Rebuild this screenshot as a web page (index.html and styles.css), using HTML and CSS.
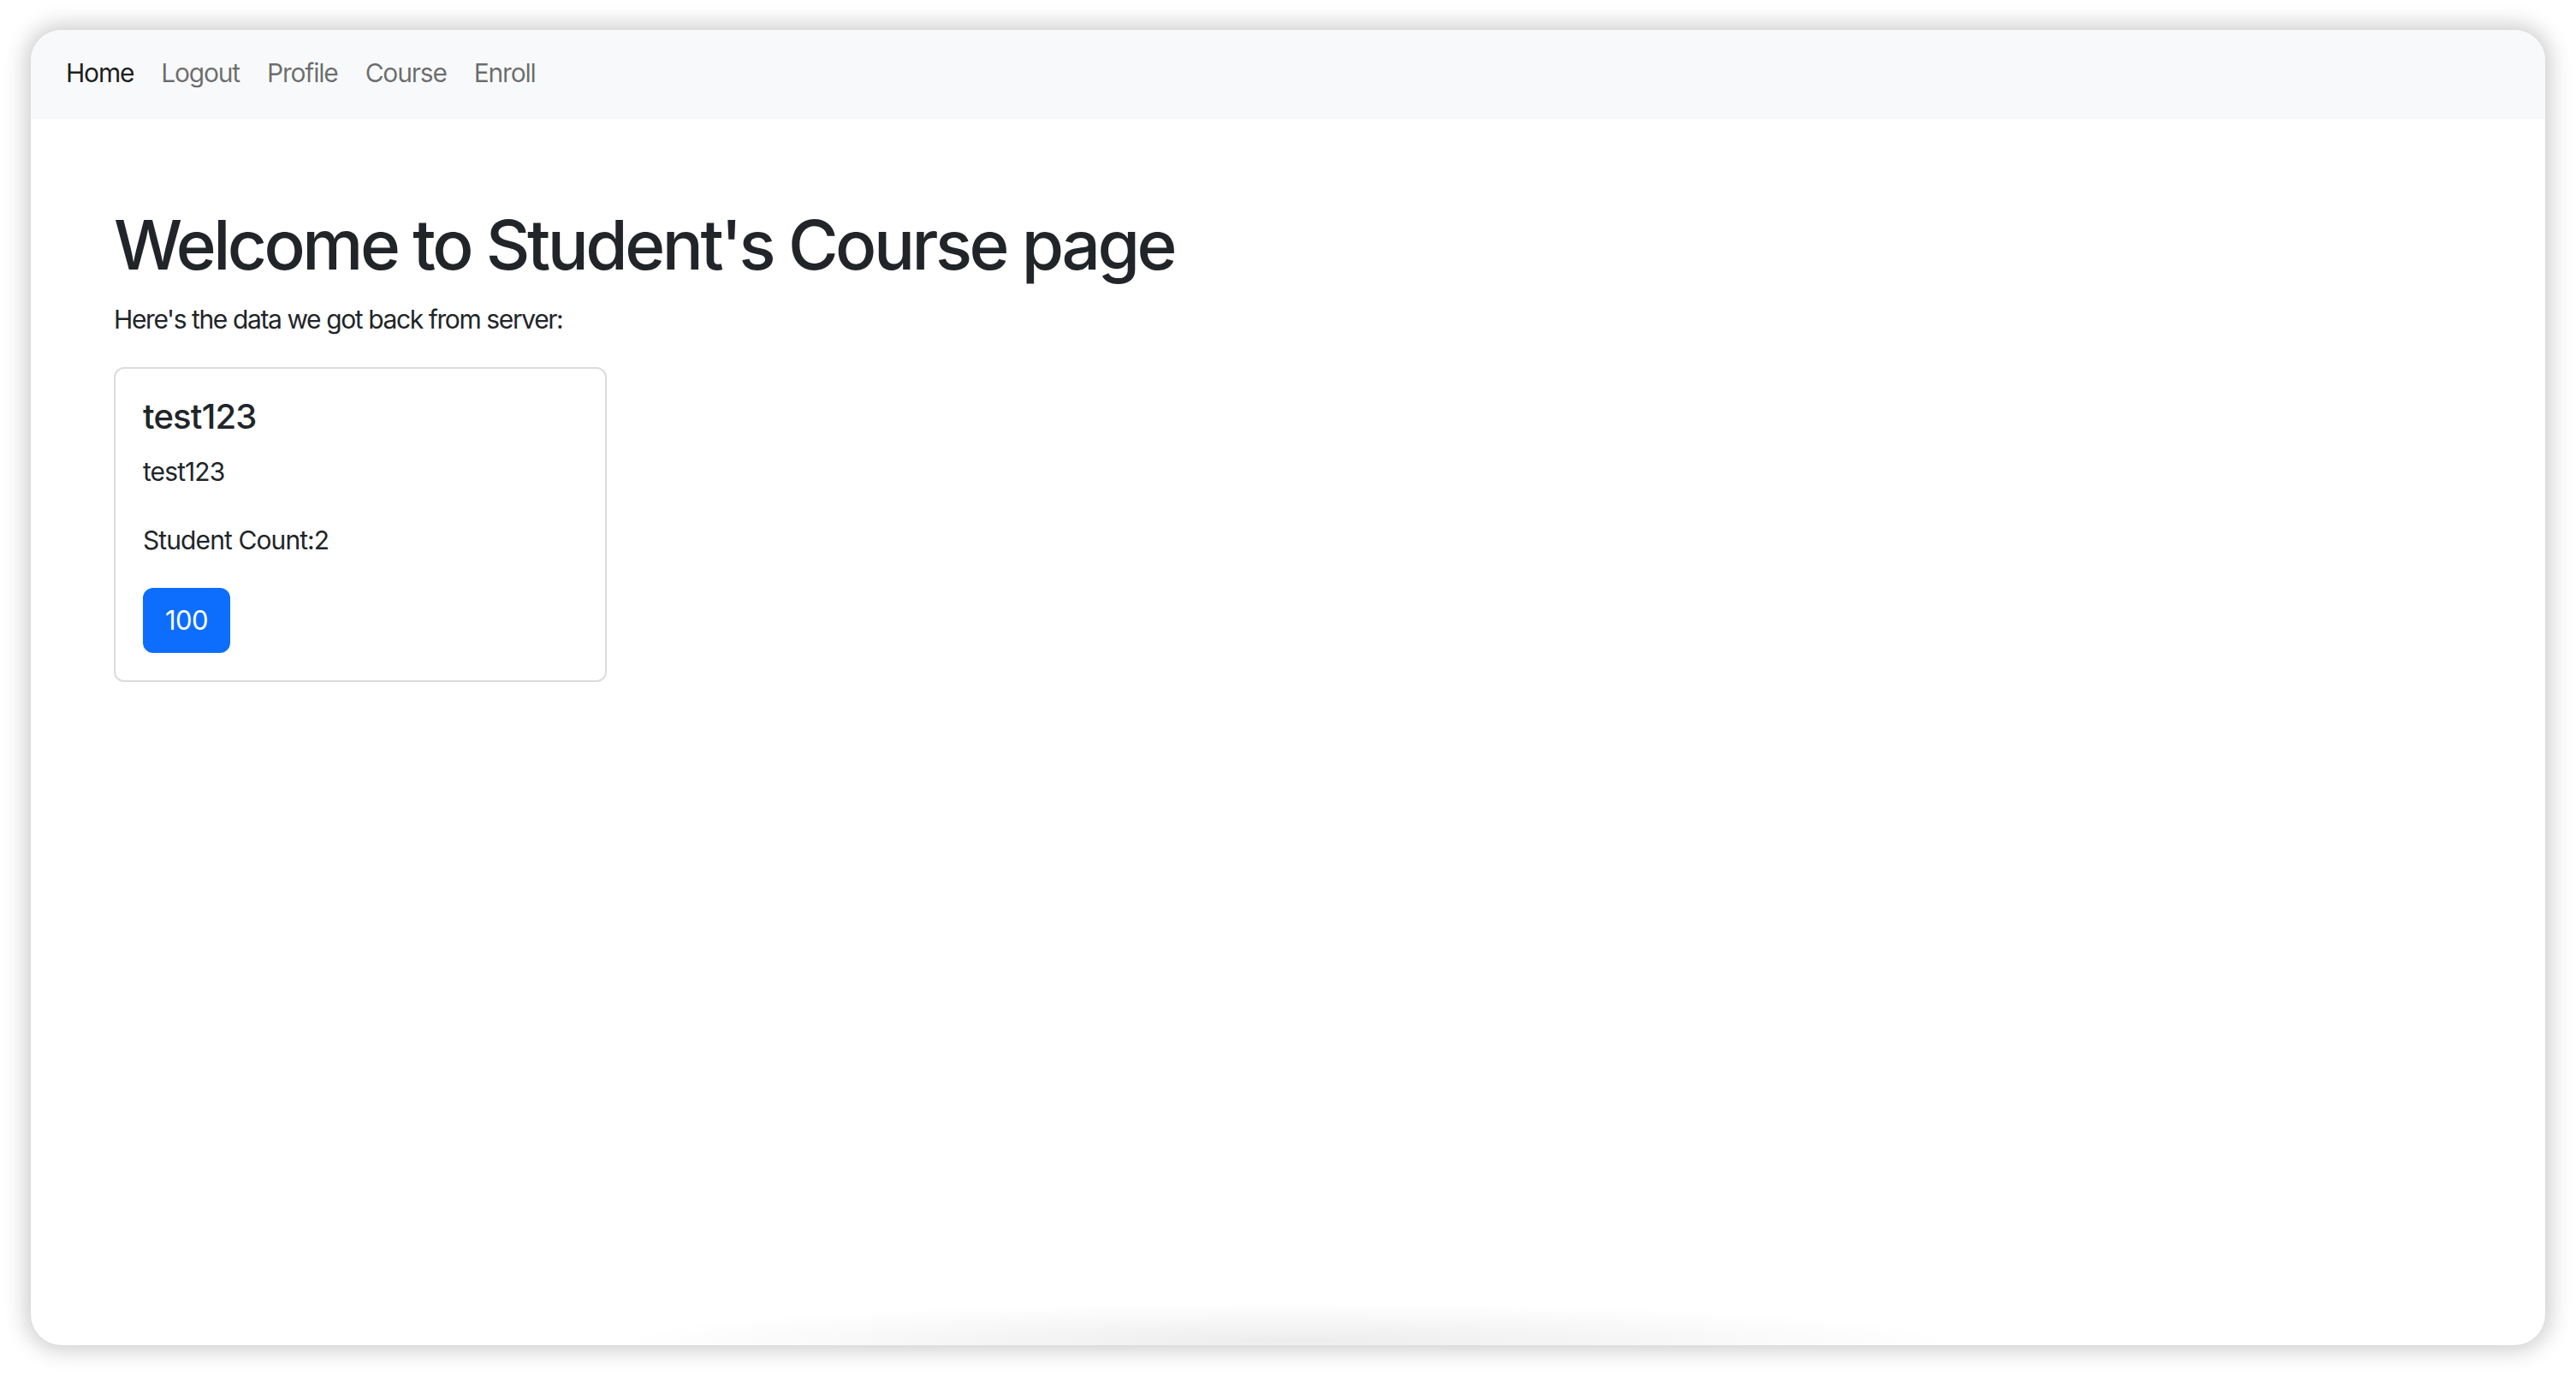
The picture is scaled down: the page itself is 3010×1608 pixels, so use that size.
FILE: index.html
```html
<!DOCTYPE html>
<html lang="en">
<head>
<meta charset="utf-8">
<title>Student's Course page</title>
<link rel="stylesheet" href="styles.css">
</head>
<body>
<div class="window">
  <nav class="navbar">
    <a class="nav-link active" href="#">Home</a>
    <a class="nav-link" href="#">Logout</a>
    <a class="nav-link" href="#">Profile</a>
    <a class="nav-link" href="#">Course</a>
    <a class="nav-link" href="#">Enroll</a>
  </nav>
  <main class="content">
    <h1 class="title">Welcome to Student's Course page</h1>
    <p class="lead-text">Here's the data we got back from server:</p>
    <div class="card">
      <div class="card-body">
        <h5 class="card-title">test123</h5>
        <p class="card-text">test123</p>
        <p class="card-text">Student Count:2</p>
        <button class="btn-primary">100</button>
      </div>
    </div>
  </main>
</div>
</body>
</html>
```

FILE: styles.css
```css
html, body {
  margin: 0;
  background: #ffffff;
}
body {
  padding: 35px 36px 36px;
  font-family: Inter, "Noto Sans", "Liberation Sans", sans-serif;
  color: #212529;
}
.window {
  position: relative;
  height: 1537px;
  border-radius: 36px;
  overflow: hidden;
  background: #ffffff;
  box-shadow: 0 0 26px 6px rgba(0, 0, 0, 0.2);
}
.window::after {
  content: "";
  position: absolute;
  left: 680px;
  right: 680px;
  bottom: -40px;
  height: 90px;
  background: radial-gradient(ellipse at center, rgba(0, 0, 0, 0.07), rgba(0, 0, 0, 0) 70%);
  pointer-events: none;
}
.navbar {
  display: flex;
  align-items: center;
  background: #f8f9fa;
  height: 104px;
  box-sizing: border-box;
  padding: 0 0 4px 25px;
}
.nav-link {
  font-size: 30px;
  line-height: 48px;
  padding: 0 16px;
  color: rgba(0, 0, 0, 0.56);
  text-decoration: none;
  letter-spacing: -1.2px;
}
.nav-link.active {
  color: rgba(0, 0, 0, 0.9);
}
.content {
  padding: 99px 0 0 97px;
}
.title {
  margin: 0 0 15px;
  font-size: 80px;
  line-height: 96px;
  font-weight: 500;
  letter-spacing: -3.5px;
}
.lead-text {
  margin: 0 0 32px;
  font-size: 30px;
  line-height: 48px;
  letter-spacing: -1.4px;
}
.card {
  width: 576px;
  box-sizing: border-box;
  border: 2px solid #dcdcdc;
  border-radius: 12px;
}
.card-body {
  padding: 32px;
}
.card-title {
  margin: 0 0 16px;
  font-size: 40px;
  line-height: 48px;
  font-weight: 500;
  letter-spacing: -0.8px;
}
.card-text {
  margin: 0 0 32px;
  font-size: 30px;
  line-height: 48px;
  letter-spacing: -0.9px;
}
.btn-primary {
  display: block;
  font-family: inherit;
  font-size: 31px;
  line-height: 48px;
  padding: 12px 24px;
  border: 2px solid #0d6efd;
  border-radius: 12px;
  background: #0d6efd;
  color: #ffffff;
  letter-spacing: -0.6px;
}
```
